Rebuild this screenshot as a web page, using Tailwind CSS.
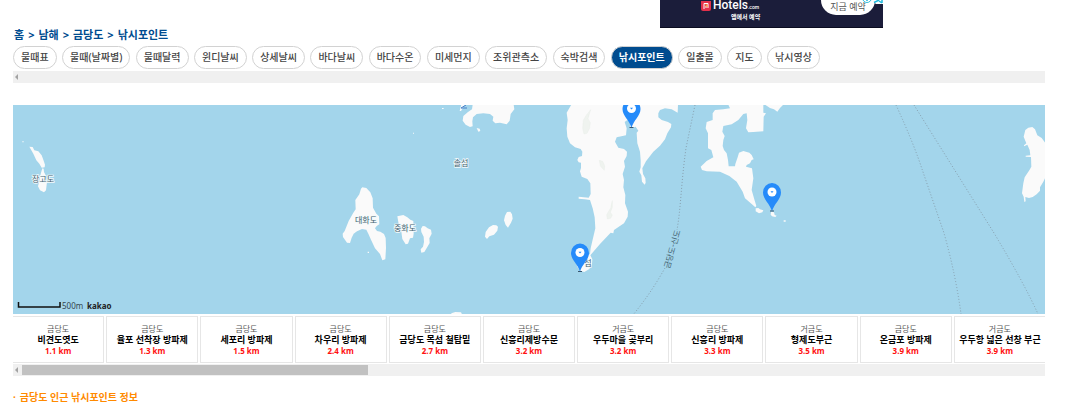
<!DOCTYPE html>
<html lang="ko">
<head>
<meta charset="utf-8">
<meta name="viewport" content="width=device-width, initial-scale=1">
<title>금당도 낚시포인트</title>
<script src="https://cdn.jsdelivr.net/npm/@tailwindcss/browser@4"></script>
</head>
<body class="bg-white pl-[13px] pr-5 font-['Noto_Sans','Noto_Sans_CJK_KR',sans-serif] text-[10px] text-[#444]">
<aside class="relative ml-[647px] flex h-[28px] w-[223px] items-start justify-between overflow-hidden border-b border-[#0b0c20] bg-[#1b1d3a] pr-2 pl-[41px] text-white">
  <div class="flex flex-col">
    <div class="flex h-3 items-center gap-[2px]">
      <svg class="h-[10px] w-[10px] shrink-0" viewBox="0 0 10 10" aria-hidden="true"><rect y="-2" width="10" height="12" rx="2" fill="#e3304b"/><path d="M3 8V2.500h4V7M5 5v2" fill="none" stroke="#fff" stroke-width="1"/><path d="M4.500 4h1.500v2" fill="none" stroke="#ffbd3c"/></svg>
      <span class="font-['Roboto'] text-[12px] leading-3 font-medium">Hotels<span class="text-[5px]">.com</span></span>
    </div>
    <span class="ml-[30px] text-[6px] leading-[10px] font-bold">앱에서 예약</span>
  </div>
  <a href="#" class="flex h-[15px] w-[54px] justify-center rounded-b-full bg-white text-[9px] leading-[14px] text-[#555]">지금 예약</a>
  <svg class="absolute top-0 right-0 h-1 w-[21px]" viewBox="0 0 21 4" aria-hidden="true"><path d="M9 0h12v4h-7z" fill="#fff"/><circle cx="5" cy="-2" r="4.500" fill="#fff" stroke="#32bddb"/><path d="M5-2v3M12 2.500L17 0M20 0v3M17 1l3 2" fill="none" stroke="#20b8dc" stroke-width="1.500"/></svg>
</aside>

<nav aria-label="위치" class="pt-px pb-[5px] pl-px text-[11px] leading-3 font-bold text-[#004c8f]">
  <ol class="flex gap-1">
    <li><a href="#">홈</a></li><li>&gt;</li><li><a href="#">남해</a></li><li>&gt;</li><li><a href="#">금당도</a></li><li>&gt;</li><li><a href="#">낚시포인트</a></li>
  </ol>
</nav>

<nav aria-label="메뉴" class="flex max-w-[807px] justify-between overflow-hidden whitespace-nowrap leading-[21px] font-medium *:shrink-0 *:rounded-full *:border *:border-[#d2d2d2] *:px-[7px]">
  <a href="#">물때표</a><a href="#">물때(날짜별)</a><a href="#">물때달력</a><a href="#">윈디날씨</a><a href="#">상세날씨</a><a href="#">바다날씨</a><a href="#">바다수온</a><a href="#">미세먼지</a><a href="#">조위관측소</a><a href="#">숙박검색</a><a href="#" aria-current="page" class="bg-[#004c8f] font-bold text-white">낚시포인트</a><a href="#">일출몰</a><a href="#">지도</a><a href="#">낚시영상</a>
</nav>
<div class="mt-[2px] flex h-3 items-center bg-[#f0f0f0] pl-[2px]"><svg class="h-[6px] w-[3px]" viewBox="0 0 3 6" aria-hidden="true"><path d="M3 0v6L0 3z" fill="#a3a3a3"/></svg></div>

<main>
<section aria-label="지도" class="mt-[22px]">
<svg class="block h-[209px] w-full" viewBox="13 105 1032 209" preserveAspectRatio="xMidYMid slice" role="img" aria-label="금당도 인근 낚시포인트 지도">
  <defs>
    <g id="pin"><path d="M0 29C-2 21-9 17-9 10A9 9.500 0 0 1 9 10C9 17 2 21 0 29z" fill="#258bfa"/><path d="M-2 28.500H2" stroke="#38566f"/><circle cy="9.500" r="4.500" fill="#fff"/><path d="M-1.500 8.700h3L0 10.500z" fill="#258bfa"/></g>
  </defs>
  <rect x="13" y="105" width="1032" height="209" fill="#a3d5eb"/>
  <g fill="#fafafa" stroke-linejoin="round">
    <g transform="translate(0 100) scale(.33333)">
      <path d="M88 140l10 1 5 10 12 3 10 12 6 16 4 12-1 8-9 1-7-12-9-10-9-20zM127 205l4 1 1 10 5 10 4 20-3 25-6 6-12-6-6-12 4-15 4-22zM67 124h4v3h-4z"/>
    </g>
    <g transform="translate(310 100) scale(.33333)">
      <path d="M157 262l12 2 12 13 7 18 1 28 10 18 8 8 1 24-8 5-5 7 6 8 10 2 11 7 5 12 1 30-2 34-9 3-7-19-15-17-12-26-8-18-6-12-13-2-15 7-10 7-6 12-5 16-9-1-12-17-1-10 6-8 12-30 14-25 7-10-1-28 12-17 5-17zM262 349l18-4 12 7 9 7 9 4 1 38-2 12-9 2-6 16-7 2-10-16-3-22-8-23zM338 378l7 1 8 6 10 4 2 12-7 14 1 14-7 12-9 15-9 2-2-10 7-8 3-14-1-16-7-14-1-10zM527 396l10-14 12-7 10 1 5 4-2 12-10 12-14 5-7 8-6-7zM591 336l10-1 5 8 2 13-5 12-9 15-7-8-5-14 3-14z"/>
      <path d="M488 14H611L613 28 602 42 599 62 590 73 570 68 556 70 548 62 550 50 540 42 520 40 500 42 489 52 487 64 488 79 480 81 467 74 458 62 460 48 474 36 486 28zM500 84l9 2 2 7-6 2zM396 24h5v3h-5zM454 14l-5 19h4l11-17zM432 176l8-2 2 4zM424 640l12-4 17 1 3 6h-32zM309 98h3v3h-3zM173 455h4v4h-4z"/>
    </g>
    <g transform="translate(550 100) scale(.33333)">
      <path d="M64 14L50 38 53 60 50 85 52 110 60 130 75 142 92 147 97 155 96 168 86 171 82 180 86 187 93 188 93 204 90 214 95 230 112 237 121 250 122 282 116 293 86 290 86 296 104 298 120 300 128 325 134 352 136 385 130 410 122 445 120 462 90 480 77 485 82 500 90 512 103 516 118 507 126 492 127 478 121 466 150 432 182 398 190 400 192 390 222 370 233 350 234 335 225 310 226 285 220 262 222 240 218 222 225 200 222 183 230 168 231 155 222 147 205 143 195 125 200 112 228 106 230 85 224 66 232 60 238 62 242 84 257 80 265 92 260 98 262 130 270 155 272 180 272 202 268 215 274 226 276 245 284 254 287 248 286 235 279 222 277 205 288 184 310 155 330 137 345 118 352 100 363 82 364 72 354 66 335 60 325 52 325 40 330 30 345 25 365 28 383 38 384 14Z"/>
      <path d="M122 29l-14 18-8 14-2 24 4 17 9-2 8-16 2-16-7-12zM148 181l10 3 6 13-1 14-12-13zM187 302l-5 22-12 20 2 13 10-2 5-10-6-8 6-15z" fill="#eff3ef" stroke="#e5ebe5"/>
    </g>
    <g transform="translate(690 100) scale(.33333)">
      <path d="M115 14L120 25 100 28 75 30 68 40 68 60 50 66 47 85 54 100 54 145 64 150 70 172 50 183 32 200 36 210 50 214 90 215 118 228 140 245 158 275 165 295 185 312 196 322 199 318 192 295 185 270 190 235 186 205 168 200 170 195 180 190 185 180 191 178 185 165 178 158 160 153 147 158 143 172 136 192 135 199 116 199 114 180 110 160 102 150 98 138 100 120 104 108 97 95 100 78 125 73 145 60 160 42 170 40 172 60 168 85 175 97 190 96 220 94 221 50 228 40 220 38 220 14ZM225 14H280L270 24 262 35 252 28 240 24zM197 325l8-1 5 4 10 3-3 6-10 3-10-6zM243 335l9 2 2 8 6 2-4 4-10-2-4-5zM281 361h6v4h-6z"/>
    </g>
    <g transform="translate(795 100) scale(.33333)">
      <path d="M691 90L700 83 712 81 720 88 727 106 740 114 751 129V233L745 245 735 262 735 272 725 283 713 291 702 294 691 291 692 304 688 306 686 290 681 280 685 250 689 232 703 211 709 200 708 171 692 170 692 167 706 166 704 150 697 134 687 139 687 136 694 130 686 110z"/>
    </g>
  </g>
  <path d="M461 108l5-3m1 3h-6" stroke="#4880c9"/>
  <g fill="none" stroke="#879fae" stroke-width="1" stroke-dasharray="1 2">
    <path d="M695 105L686 148C681 184 681 207 677 230M665 268C653 289 645 300 633 315M896 105Q914 144 923 172L944 233Q956 276 961 314M914 105L994 233Q1024 283 1038 314"/>
  </g>
  <g class="font-['Noto_Sans_CJK_KR']" font-size="8" fill="#42616e" stroke="#f4fafc" stroke-width="1.500" paint-order="stroke" text-anchor="middle">
    <text x="43" y="182">장고도</text><text x="366" y="223">대화도</text><text x="405" y="231">중화도</text><text x="461" y="166">솔섬</text><text x="588" y="266">섬</text>
    <text stroke="none" transform="translate(675 250) rotate(-74)">금당도-신도</text>
  </g>
  <use href="#pin" x="631.500" y="99"/><use href="#pin" x="772" y="182.500"/><use href="#pin" x="580" y="243"/>
  <path d="M18.500 302v5h41.500V302" fill="none" stroke="#111" stroke-width="1.500"/>
  <text x="62" y="308.500" class="font-['Noto_Sans']" font-size="8" fill="#36474f">500m</text>
  <text x="87" y="308.500" class="font-['Noto_Sans']" font-size="8" font-weight="700" fill="#222">kakao</text>
</svg>
</section>

<section aria-label="가까운 낚시포인트" class="mt-[2px] overflow-hidden">
  <ul class="-mx-px grid grid-cols-11 gap-[2px] text-center text-[9px] leading-[11px] font-bold whitespace-nowrap text-black *:border *:border-[#e6e6e6] *:pt-[6px] *:pb-[5px]">
    <li><a href="#"><p class="text-[8px] font-normal text-[#555]">금당도</p><p>비견도엿도</p><p class="leading-3 text-[8px] text-[#f11]">1.1 km</p></a></li>
    <li><a href="#"><p class="text-[8px] font-normal text-[#555]">금당도</p><p>율포 선착장 방파제</p><p class="leading-3 text-[8px] text-[#f11]">1.3 km</p></a></li>
    <li><a href="#"><p class="text-[8px] font-normal text-[#555]">금당도</p><p>세포리 방파제</p><p class="leading-3 text-[8px] text-[#f11]">1.5 km</p></a></li>
    <li><a href="#"><p class="text-[8px] font-normal text-[#555]">금당도</p><p>차우리 방파제</p><p class="leading-3 text-[8px] text-[#f11]">2.4 km</p></a></li>
    <li><a href="#"><p class="text-[8px] font-normal text-[#555]">금당도</p><p>금당도 목섬 철탑밑</p><p class="leading-3 text-[8px] text-[#f11]">2.7 km</p></a></li>
    <li><a href="#"><p class="text-[8px] font-normal text-[#555]">금당도</p><p>신흥리제방수문</p><p class="leading-3 text-[8px] text-[#f11]">3.2 km</p></a></li>
    <li><a href="#"><p class="text-[8px] font-normal text-[#555]">거금도</p><p>우두마을 곶부리</p><p class="leading-3 text-[8px] text-[#f11]">3.2 km</p></a></li>
    <li><a href="#"><p class="text-[8px] font-normal text-[#555]">금당도</p><p>신흥리 방파제</p><p class="leading-3 text-[8px] text-[#f11]">3.3 km</p></a></li>
    <li><a href="#"><p class="text-[8px] font-normal text-[#555]">거금도</p><p>형제도부근</p><p class="leading-3 text-[8px] text-[#f11]">3.5 km</p></a></li>
    <li><a href="#"><p class="text-[8px] font-normal text-[#555]">금당도</p><p>온금포 방파제</p><p class="leading-3 text-[8px] text-[#f11]">3.9 km</p></a></li>
    <li><a href="#"><p class="text-[8px] font-normal text-[#555]">거금도</p><p>우두항 넓은 선창 부근</p><p class="leading-3 text-[8px] text-[#f11]">3.9 km</p></a></li>
  </ul>
</section>
<div class="mt-px flex h-3 items-center gap-1 bg-[#f0f0f0] pl-[2px]"><svg class="h-[6px] w-[3px]" viewBox="0 0 3 6" aria-hidden="true"><path d="M3 0v6L0 3z" fill="#a3a3a3"/></svg><div class="h-[10px] w-[346px] bg-[#c1c1c1]"></div></div>
<h2 class="mt-[13px] flex gap-1 text-[10px] leading-4 font-bold text-[#ff8a00]"><span>·</span><span>금당도 인근 낚시포인트 정보</span></h2>
</main>
</body>
</html>
